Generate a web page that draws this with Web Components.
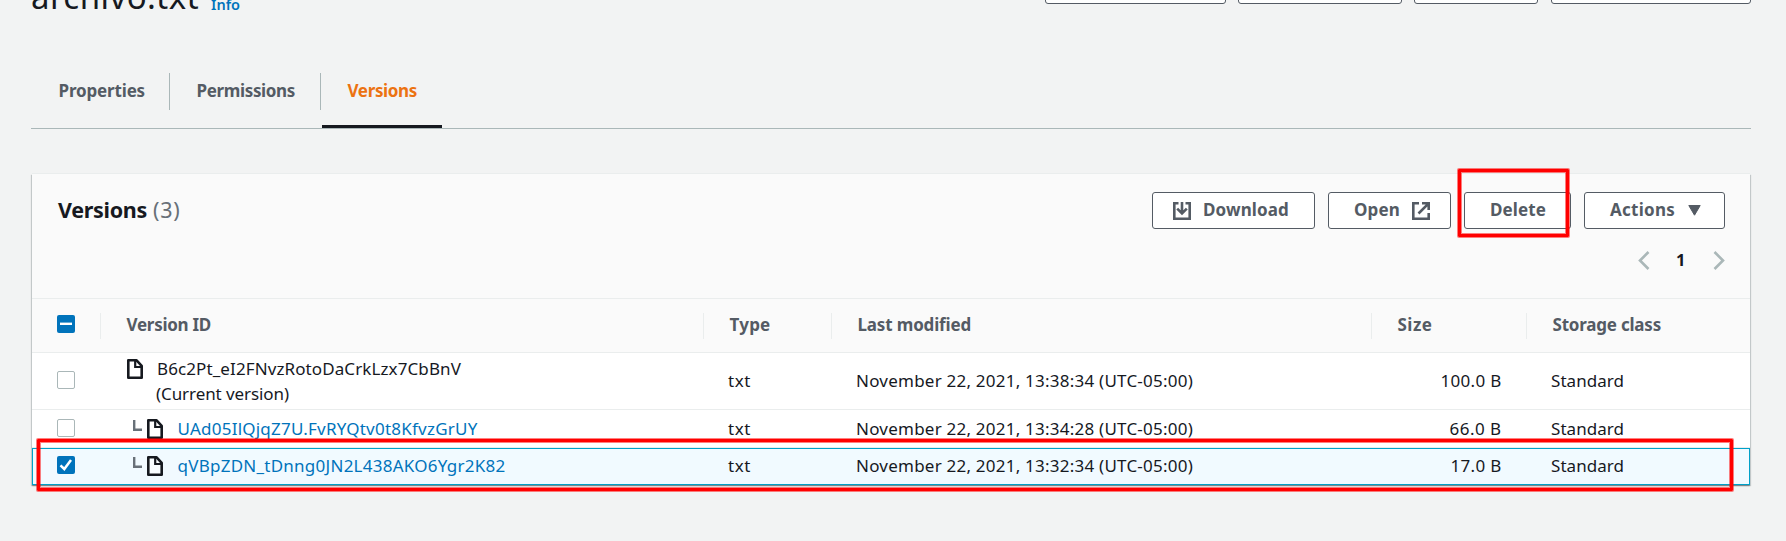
<!DOCTYPE html>
<html lang="en">
<head>
<meta charset="utf-8">
<title>archivo.txt - Versions</title>
<style>
html,body{margin:0;height:541px;overflow:hidden;background:#f2f3f3}
body{font:17px/24px "Noto Sans","Open Sans",sans-serif;color:#16191f}
</style>
</head>
<body>
<s3-page></s3-page>
<script>
const define=(name,html,setup)=>customElements.define(name,class extends HTMLElement{
  constructor(){
    super();
    const t=document.createElement('template');
    t.innerHTML=html;
    this.attachShadow({mode:'open'}).append(t.content.cloneNode(true));
  }
  connectedCallback(){ if(setup) setup(this,this.shadowRoot); }
});

/* A label whose tracking is tuned so that it fills the width in "w". */
define('fit-text',`<style>:host{display:inline-block;white-space:nowrap;flex:none}span{display:inline-block}</style><span><slot></slot></span>`,
(el,root)=>{
  const s=root.querySelector('span'),w=+el.getAttribute('w');
  const n=el.textContent.length;
  el.style.width=w+'px';
  s.style.letterSpacing=((w-s.getBoundingClientRect().width)/n)+'px';
});

const icons={
download:[18,18,`<path d="M5.500 1.300H1.300v15.400h15.400V1.300H12.500M9 0v11M4.200 6.600 9 11.400 13.800 6.600" fill="none" stroke="#545b64" stroke-width="2.600"/>`],
external:[18,18,`<path d="M7 1.300H1.300v15.400h15.400V11M10 1.300h6.700V8M16.400 1.600 6.500 11.500" fill="none" stroke="#545b64" stroke-width="2.600"/>`],
caret:[13,11,`<path d="M.8.5h11.4L6.5 10.2z" fill="#545b64" stroke="#545b64" stroke-linejoin="round"/>`],
prev:[12,19,`<path d="M10.5 1 2 9.5l8.500 8.500" fill="none" stroke="#aab7b8" stroke-width="2.600"/>`],
next:[12,19,`<path d="M1.500 1 10 9.500 1.500 18" fill="none" stroke="#aab7b8" stroke-width="2.600"/>`],
file:[16,20,`<path d="M1.300 1.300h8.300l5.100 5.500v11.900H1.300z" fill="#fff" fill-opacity=".5" stroke="#16191f" stroke-width="2.600" stroke-linejoin="round"/><path d="M8.200 1.500v6.500h6.500" fill="none" stroke="#16191f" stroke-width="2.200"/>`],
branch:[9,11,`<path d="M1.200 0v9.700H9" fill="none" stroke="#687078" stroke-width="2.400"/>`],
check:[18,18,`<path d="M3.500 9.300 7.300 13 14 4" fill="none" stroke="#fff" stroke-width="2.500"/>`],
dash:[18,18,`<path d="M3 8.800h12" stroke="#fff" stroke-width="2.400"/>`]
};
define('s3-icon',`<style>:host{display:block;flex:none}svg{display:block}</style><div></div>`,(el,root)=>{
  const [w,h,p]=icons[el.getAttribute('name')];
  root.querySelector('div').innerHTML=`<svg width="${w}" height="${h}" viewBox="0 0 ${w} ${h}">${p}</svg>`;
});

define('s3-button',`<style>
:host{display:flex;box-sizing:border-box;align-items:center;height:37px;border:1px solid #545b64;border-radius:3px;background:#fff;color:#545b64;font-weight:700;flex:none}
::slotted(fit-text){margin-top:-1px}
</style><slot></slot>`);

define('s3-tab',`<style>
:host{display:flex;flex:none;box-sizing:border-box;height:37px;border-right:1px solid #aab7b8;font-weight:700;color:#545b64;line-height:35px}
:host([active]){height:55px;border-right:0;border-bottom:3px solid #16191f;color:#ec7211;margin-left:1px}
</style><slot></slot>`);

define('s3-checkbox',`<style>
:host{display:block;box-sizing:border-box;width:18px;height:18px;margin-top:-2px;border:1px solid #aab7b8;border-radius:2px;background:#fff}
:host([state]){border:0;background:#0073bb}
s3-icon{display:none}
:host([state=check]) .c,:host([state=dash]) .d{display:block}
</style><s3-icon class="c" name="check"></s3-icon><s3-icon class="d" name="dash"></s3-icon>`);

define('s3-row',`<style>
:host{display:grid;grid-template-columns:69px 603px 128px 540px 155px 1fr;align-items:center;box-sizing:border-box;background:#fff;height:38px;border-bottom:1px solid #eaeded}
:host([head]){height:54px;background:#fafafa;color:#545b64;font-weight:700}
:host([tall]){height:57px}
:host([selected]){background:#f1faff;border:1px solid #00a1c9;height:37px;padding-bottom:1px;grid-template-columns:68px 603px 128px 540px 155px 1fr}
:host([selected]) ::slotted([check]){padding-left:24px}
</style><slot></slot>`);

define('s3-cell',`<style>
:host{display:flex;align-items:center;box-sizing:border-box;padding-left:24px;height:24px}
:host([check]){padding-left:25px}
:host([head]){height:26px;padding-left:25.5px;border-right:1px solid #eaeded}
:host([head]) ::slotted(fit-text){margin-top:-2px}
:host([head][check]){padding-left:25px}
:host([last]){border-right:0}
:host([end]){justify-content:flex-end;padding-right:25.5px}
:host([name]){padding-left:26px}
:host([two]){height:50px;align-items:flex-start}
</style><slot></slot>`);

/* Hand-drawn style highlight laid over the interface. */
define('s3-highlight',`<style>
:host{position:absolute;box-sizing:border-box;border:3px solid #f00;border-radius:1px;box-shadow:0 0 0 1px rgba(255,0,0,.5),inset 0 0 0 1px rgba(255,0,0,.5);pointer-events:none}
</style>`);

const row=(attr,state,lead,id,w,link,date,size,sw)=>`<s3-row ${attr}>
<s3-cell check><s3-checkbox ${state}></s3-checkbox></s3-cell>
<s3-cell name>${lead}<fit-text class="${link}" w="${w}">${id}</fit-text></s3-cell>
<s3-cell><fit-text w="23">txt</fit-text></s3-cell>
<s3-cell><fit-text w="337">${date}</fit-text></s3-cell>
<s3-cell end><fit-text w="${sw}">${size}</fit-text></s3-cell>
<s3-cell><fit-text w="73">Standard</fit-text></s3-cell></s3-row>`;
const child='<span class="child"><s3-icon name="branch"></s3-icon><s3-icon name="file"></s3-icon></span>';

define('s3-page',`<style>
:host{display:flow-root;position:relative;height:541px;padding:0 35px 0 31px;box-sizing:border-box;overflow:hidden}
header{display:flex;height:40px;margin-top:-36px}
h1{margin:13px 0 0;font-size:33px;line-height:40px;font-weight:400;height:40px}
.info{margin:21px 0 0 12px;font-size:14.5px;line-height:38px;font-weight:600;color:#0073bb}
.top{display:flex;margin-left:auto;align-items:flex-end;gap:12px}
nav{display:flex;height:56px;margin-top:69px;box-sizing:border-box;border-bottom:1px solid #aab7b8}
section{margin:45px 0 0 1px;width:1718px;background:#fafafa;box-shadow:0 1px 1px 0 rgba(0,28,36,.3),1px 1px 1px 0 rgba(0,28,36,.15),-1px 1px 1px 0 rgba(0,28,36,.15),0 -1px 0 0 #eaeded}
.bar{display:flex;padding:18px 25px 0 26px;height:37px}
h2{margin:0;font-size:21.5px;line-height:36px;font-weight:700;display:flex;gap:6px}
h2 .n{font-weight:400;color:#687078}
.buttons{display:flex;margin-left:auto}
.pager{display:flex;justify-content:flex-end;align-items:center;height:24px;padding:19px 25px 26px 0;border-bottom:1px solid #eaeded}
.pager fit-text{margin:0 28px 0 26px;font-weight:700;font-size:16.5px}
.link{color:#0073bb}
.child{display:flex;gap:5px;margin:0 14.5px 0 6px}
.child s3-icon:first-child{margin-top:1px}
.lines{display:flex;flex-direction:column;margin-left:14px;line-height:25px}
.lines fit-text+fit-text{margin-left:-1px}
</style>
<header><h1><fit-text w="168">archivo.txt</fit-text></h1><fit-text class="info" w="29">Info</fit-text>
<div class="top"><s3-button style="width:181px"></s3-button><s3-button style="width:164px"></s3-button><s3-button style="width:124px"></s3-button><s3-button style="width:200px;margin-left:1px"></s3-button></div></header>
<nav>
<s3-tab style="width:139px;padding-left:27.5px"><fit-text w="86.500">Properties</fit-text></s3-tab>
<s3-tab style="width:151px;padding-left:26.500px"><fit-text w="98.500">Permissions</fit-text></s3-tab>
<s3-tab active style="width:120px;padding-left:25.5px"><fit-text w="69.500">Versions</fit-text></s3-tab>
</nav>
<section>
<div class="bar"><h2><fit-text w="89">Versions</fit-text><fit-text class="n" w="27.5">(3)</fit-text></h2>
<div class="buttons">
<s3-button style="width:163px;margin-right:13px;padding-left:20px"><s3-icon name="download"></s3-icon><fit-text style="margin-left:12px" w="86">Download</fit-text></s3-button>
<s3-button style="width:123px;margin-right:13px;padding-left:25px"><fit-text w="46">Open</fit-text><s3-icon style="margin-left:12px" name="external"></s3-icon></s3-button>
<s3-button style="width:107px;margin-right:13px;padding-left:25px"><fit-text w="56">Delete</fit-text></s3-button>
<s3-button style="width:141px;padding-left:25px"><fit-text w="65">Actions</fit-text><s3-icon style="margin-left:13px" name="caret"></s3-icon></s3-button>
</div></div>
<div class="pager"><s3-icon name="prev"></s3-icon><fit-text w="9">1</fit-text><s3-icon name="next"></s3-icon></div>
<s3-row head>
<s3-cell head check><s3-checkbox state="dash" style="margin-top:-3px"></s3-checkbox></s3-cell>
<s3-cell head><fit-text w="84.500">Version ID</fit-text></s3-cell>
<s3-cell head><fit-text w="41">Type</fit-text></s3-cell>
<s3-cell head><fit-text w="113.500">Last modified</fit-text></s3-cell>
<s3-cell head><fit-text w="35">Size</fit-text></s3-cell>
<s3-cell head last><fit-text w="108.500">Storage class</fit-text></s3-cell>
</s3-row>
<s3-row tall>
<s3-cell check><s3-checkbox></s3-checkbox></s3-cell>
<s3-cell name two><s3-icon name="file" style="margin-top:3px"></s3-icon><div class="lines"><fit-text w="304">B6c2Pt_eI2FNvzRotoDaCrkLzx7CbBnV</fit-text><fit-text w="133">(Current version)</fit-text></div></s3-cell>
<s3-cell><fit-text w="23">txt</fit-text></s3-cell>
<s3-cell><fit-text w="337">November 22, 2021, 13:38:34 (UTC-05:00)</fit-text></s3-cell>
<s3-cell end><fit-text w="61">100.0 B</fit-text></s3-cell>
<s3-cell><fit-text w="73">Standard</fit-text></s3-cell>
</s3-row>
${row('','',child,'UAd05IlQjqZ7U.FvRYQtv0t8KfvzGrUY','300','link','November 22, 2021, 13:34:28 (UTC-05:00)','66.0 B','52')}
${row('selected','state="check"',child,'qVBpZDN_tDnng0JN2L438AKO6Ygr2K82','328','link','November 22, 2021, 13:32:34 (UTC-05:00)','17.0 B','51')}
</section>
<s3-highlight style="left:1458px;top:169px;width:111px;height:68px"></s3-highlight>
<s3-highlight style="left:37px;top:439px;width:1696px;height:52px"></s3-highlight>`);
</script>
</body>
</html>
